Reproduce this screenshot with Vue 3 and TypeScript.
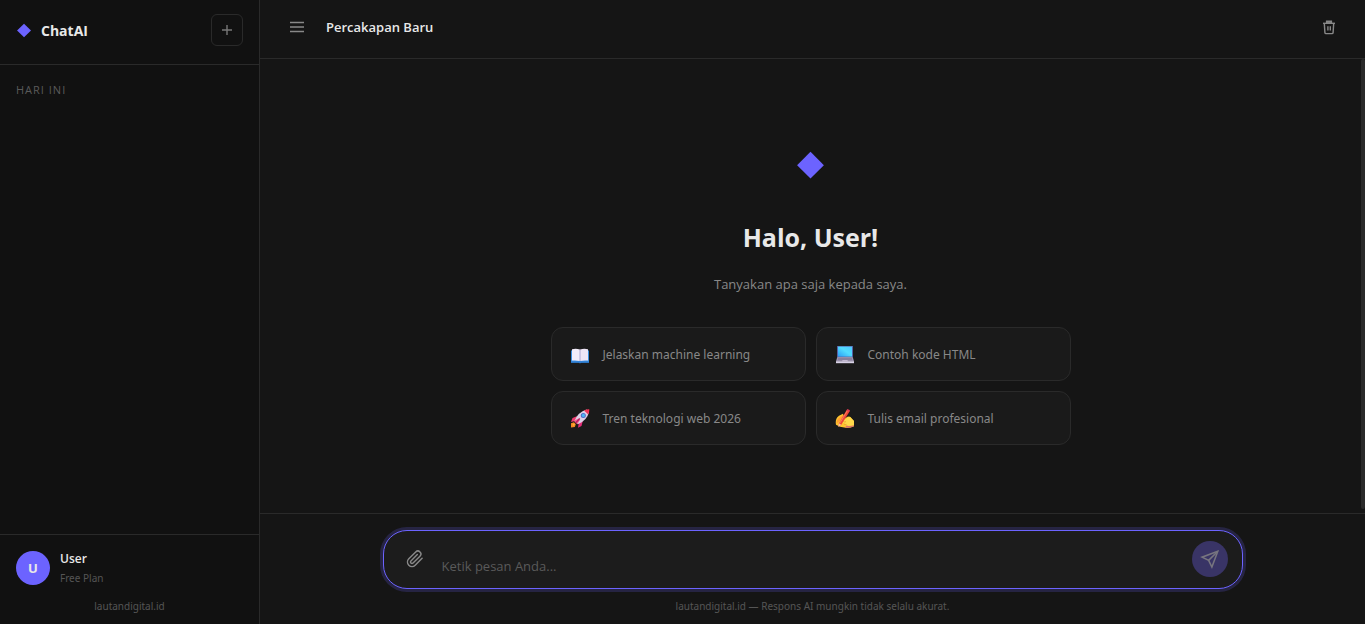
<script setup lang="ts">
import { ref } from 'vue'

interface Suggestion {
  icon: 'book' | 'laptop' | 'rocket' | 'write'
  label: string
}

const suggestions: Suggestion[] = [
  { icon: 'book', label: 'Jelaskan machine learning' },
  { icon: 'laptop', label: 'Contoh kode HTML' },
  { icon: 'rocket', label: 'Tren teknologi web 2026' },
  { icon: 'write', label: 'Tulis email profesional' },
]

const message = ref('')
</script>

<template>
  <div class="app">
    <aside class="sidebar">
      <div class="side-head">
        <div class="brand">
          <svg class="brand-mark" viewBox="0 0 14 14" aria-hidden="true"><path d="M7.500 .7 14 7 7.500 13.300 1 7z" fill="#6c63ff" /></svg>
          <span>ChatAI</span>
        </div>
        <button class="new-chat" type="button" aria-label="Percakapan baru">
          <svg viewBox="0 0 10 10" aria-hidden="true"><path d="M5 0v10M0 5h10" stroke="#777" stroke-width="1.4" /></svg>
        </button>
      </div>
      <nav class="history">
        <h2>HARI INI</h2>
      </nav>
      <footer class="side-foot">
        <div class="account">
          <div class="avatar">U</div>
          <div>
            <div class="name">User</div>
            <div class="plan">Free Plan</div>
          </div>
        </div>
        <a class="site" href="#">lautandigital.id</a>
      </footer>
    </aside>

    <main class="main">
      <header class="topbar">
        <button class="icon-button" type="button" aria-label="Menu">
          <svg class="menu-icon" viewBox="0 0 14 12" aria-hidden="true"><path d="M0 1.5h14M0 6h14M0 10.5h14" stroke="#888" stroke-width="1.3" /></svg>
        </button>
        <h1>Percakapan Baru</h1>
        <button class="icon-button" type="button" aria-label="Hapus percakapan">
          <svg class="trash-icon" viewBox="0 0 14 16" fill="none" stroke="#888" stroke-width="1.4" aria-hidden="true">
            <path d="M1 4.300h12" />
            <path d="M4.600 4V2.300h4.800V4z" fill="#777" />
            <path d="M2.300 4.300l.6 9.300q.1 1 1.100 1h6q1 0 1.100-1l.6-9.300" />
            <path d="M5.900 7.200v4.300M8.300 7.200v4.300" />
          </svg>
        </button>
      </header>

      <section class="chat">
        <div class="welcome">
          <svg class="hero-mark" viewBox="0 0 28 28" aria-hidden="true"><path d="M13.500 .8 26.900 14.200 13.500 27.600.1 14.200z" fill="#6c63ff" /></svg>
          <h2>Halo, User!</h2>
          <p>Tanyakan apa saja kepada saya.</p>
          <div class="suggestions">
            <button v-for="item in suggestions" :key="item.label" class="card" type="button">
              <svg v-if="item.icon === 'book'" class="card-icon" viewBox="0 0 20 20" aria-hidden="true">
                <path d="M1 6.500h18v12H1z" fill="#3b8fe0" />
                <path d="M1 17.200h18v1.500h-8l-1 .7-1-.7H1z" fill="#2f7fd3" />
                <path d="M2 5.200q4-.8 7.900.2V17Q6 16 2 16.600z" fill="#f3edfa" />
                <path d="M18 5.200q-4-.8-7.900.2V17q3.900-1 7.900-.4z" fill="#eee5f6" />
                <path d="M10 5.300V17" stroke="#b7a6cd" stroke-width=".8" />
              </svg>
              <svg v-else-if="item.icon === 'laptop'" class="card-icon" viewBox="0 0 20 20" aria-hidden="true">
                <defs>
                  <linearGradient id="screen" x1="0" y1="1" x2="1" y2="0">
                    <stop stop-color="#2a9df4" />
                    <stop offset=".55" stop-color="#51dcff" />
                    <stop offset="1" stop-color="#4ec8ff" />
                  </linearGradient>
                </defs>
                <path d="M2 2h16v11H2z" fill="#5660a5" />
                <path d="M3 2.600h14v10H3z" fill="url(#screen)" />
                <path d="M2.300 13h15.400l1.300 4.300H1z" fill="#9b91ad" />
                <path d="M1 17.200h18v2H1z" fill="#d8d1e6" />
                <path d="M3 14.300h14M3 15.700h14" stroke="#766c89" stroke-width=".6" />
                <path d="M7.500 16h5l.6 1.700H7z" fill="#c3b9d1" />
              </svg>
              <svg v-else-if="item.icon === 'rocket'" class="card-icon" viewBox="0 0 20 20" aria-hidden="true">
                <g transform="translate(0 .5)">
                  <path d="M1 14.800 4 13.800l1.800 2-1 2.600-3.800.6z" fill="#f58a22" />
                  <path d="M2.500 16 4 15l.8 1.200-1.300 1.300z" fill="#ffb338" />
                  <path d="M7.500 7.500 2.500 9.500 1 13.500l5-1.200z" fill="#ef3d72" />
                  <path d="M12.800 12.500 11.500 17.500l-3.500 1.800.8-5z" fill="#e52c78" />
                  <path d="M4.500 12.500Q8 3.500 16.500 1L19 3.500Q17 12 7.800 15.800z" fill="#dcd1e7" />
                  <path d="M14 1.900Q17 .5 19.300.7q.2 2.400-1.100 5.300z" fill="#f33356" />
                  <path d="M3.900 12.300 8.500 10l1.500 1.500-2.700 4.300z" fill="#f3608e" />
                  <path d="m5.500 14.500 4.300-4.500" stroke="#b91c61" stroke-width="1.200" />
                  <circle cx="13.300" cy="7" r="2.500" fill="#5269c9" />
                  <circle cx="13.400" cy="6.900" r="1.600" fill="#48b9f2" />
                </g>
              </svg>
              <svg v-else class="card-icon" viewBox="0 0 20 20" aria-hidden="true">
                <g transform="translate(0 .8)">
                  <path d="M1 16Q-.2 10 4 7l4-2 1 3-3 4 6.500-4q3-1 4 1.500l2.500 2.600v5.400q-4 2-8.500 1.500L5 18z" fill="#ffc52f" />
                  <path d="m7 13 6-4.500q2.500-.6 3.500 1.200l2.500 2.500v4.500q-4 .7-7.500-.1z" fill="#ffd94a" />
                  <path d="M1.500 15q0-5 4-7l3-2 .5 1.500-4.500 5z" fill="#ff9d32" />
                  <path d="M11.500 16.700q4 1.200 7.500-.3v1q-4 2-9 1.500z" fill="#db7568" />
                  <path d="m11.800 1 2.900 1.400L6.300 16 3.500 18l.3-3.400z" fill="#ef4538" />
                  <path d="m12.300 2-7.900 13" stroke="#ff8a65" stroke-width=".8" />
                  <path d="m3.800 14.600 2.500 1.400-2.900 2.300z" fill="#f6c9a0" />
                  <path d="m12.400.2 2.600 1.300-.8 1.500-2.700-1.300z" fill="#e13a55" />
                  <path d="M8 12.600q1.500 1 3 .3M9 15.200q1.300.8 2.500.4" fill="none" stroke="#e99126" stroke-width=".7" />
                </g>
              </svg>
              <span>{{ item.label }}</span>
            </button>
          </div>
        </div>
        <div class="scroll-thumb" aria-hidden="true"></div>
      </section>

      <footer class="composer-area">
        <form class="composer" @submit.prevent>
          <button class="attach" type="button" aria-label="Lampirkan berkas">
            <svg viewBox="0 0 24 24" fill="none" stroke="#888" stroke-width="2" stroke-linecap="round" stroke-linejoin="round" aria-hidden="true">
              <path d="m21.440 11.050-9.190 9.190a6 6 0 0 1-8.490-8.490l9.190-9.190a4 4 0 0 1 5.660 5.660l-9.200 9.190a2 2 0 0 1-2.830-2.830l8.490-8.480" />
            </svg>
          </button>
          <textarea v-model="message" rows="1" placeholder="Ketik pesan Anda..." aria-label="Pesan"></textarea>
          <button class="send" type="submit" aria-label="Kirim" disabled>
            <svg viewBox="0 0 20 20" fill="none" stroke="#77757f" stroke-width="1.500" stroke-linejoin="miter" aria-hidden="true">
              <path d="M17.800 2.200 2 8.200 8.600 11.400 11.900 18z" />
              <path d="M17.800 2.200 8.600 11.400" />
            </svg>
          </button>
        </form>
        <p class="note">lautandigital.id — Respons AI mungkin tidak selalu akurat.</p>
      </footer>
    </main>
  </div>
</template>

<style>
body {
  margin: 0;
  background: #151515;
}
</style>

<style scoped>
* {
  box-sizing: border-box;
}

.app {
  display: flex;
  height: 100vh;
  overflow: hidden;
  background: #151515;
  color: #e8e8e8;
  font-family: "Segoe UI", "Open Sans", "Noto Sans", sans-serif;
  font-size: 13px;
}

button {
  display: flex;
  align-items: center;
  justify-content: center;
  padding: 0;
  border: 0;
  background: none;
  color: inherit;
  font: inherit;
  cursor: pointer;
}

h1,
h2,
p {
  margin: 0;
}

.sidebar {
  display: flex;
  flex: none;
  flex-direction: column;
  width: 260px;
  border-right: 1px solid #2a2a2a;
  background: #111;
}

.side-head {
  display: flex;
  align-items: center;
  justify-content: space-between;
  height: 65px;
  padding: 0 16px 4px;
  border-bottom: 1px solid #2a2a2a;
}

.brand {
  display: flex;
  align-items: center;
  gap: 10px;
  font-size: 14px;
  font-weight: 700;
}

.brand-mark {
  width: 15px;
  height: 15px;
}

.new-chat {
  width: 32px;
  height: 32px;
  border: 1px solid #2a2a2a;
  border-radius: 6px;
}

.new-chat svg {
  width: 10px;
  height: 10px;
}

.history {
  flex: 1;
  padding: 16px;
}

.history h2 {
  color: #5a5a5a;
  font-size: 11px;
  font-weight: 400;
  letter-spacing: 1px;
  line-height: 18px;
}

.side-foot {
  height: 90px;
  padding: 16px 16px 0;
  border-top: 1px solid #2a2a2a;
}

.account {
  display: flex;
  align-items: center;
  gap: 10px;
  height: 34px;
}

.avatar {
  display: flex;
  align-items: center;
  justify-content: center;
  width: 34px;
  height: 34px;
  border-radius: 50%;
  background: #6c63ff;
  font-weight: 700;
}

.name {
  padding-top: 2px;
  font-size: 12px;
  font-weight: 600;
  line-height: 18px;
}

.plan {
  color: #555;
  font-family: "Segoe UI", "Noto Sans", sans-serif;
  font-size: 10px;
  line-height: 20px;
}

.site,
.note {
  display: block;
  color: #555;
  font-family: "Segoe UI", "Noto Sans", sans-serif;
  font-size: 10px;
  line-height: 16px;
  text-align: center;
  text-decoration: none;
}

.site {
  margin-top: 13px;
}

.main {
  display: flex;
  flex: 1;
  flex-direction: column;
  min-width: 0;
}

.topbar {
  display: flex;
  align-items: center;
  height: 59px;
  padding: 0 19px 4px 20px;
  border-bottom: 1px solid #2a2a2a;
}

.topbar h1 {
  flex: 1;
  margin-left: 12px;
  font-size: 13px;
  font-weight: 600;
}

.icon-button {
  width: 34px;
  height: 34px;
}

.menu-icon {
  width: 14px;
  height: 12px;
}

.trash-icon {
  width: 14px;
  height: 16px;
}

.chat {
  display: flex;
  flex: 1;
  min-height: 0;
}

.welcome {
  display: flex;
  flex: 1;
  flex-direction: column;
  align-items: center;
  padding: 92px 24px 0;
}

.hero-mark {
  flex: none;
  width: 28px;
  height: 28px;
}

.welcome h2 {
  margin-top: 40px;
  font-size: 25px;
  font-weight: 700;
  line-height: 36px;
}

.welcome p {
  margin-top: 18px;
  color: #888;
  font-size: 13px;
  line-height: 22px;
}

.suggestions {
  display: grid;
  grid-template-columns: 1fr 1fr;
  gap: 10px;
  width: 100%;
  max-width: 520px;
  margin-top: 32px;
}

.card {
  justify-content: flex-start;
  gap: 13px;
  height: 54px;
  padding: 0 18px;
  border: 1px solid #2a2a2a;
  border-radius: 12px;
  background: #1a1a1a;
  color: #888;
  font-family: "Segoe UI", "Noto Sans", sans-serif;
  font-size: 12px;
}

.card-icon {
  flex: none;
  width: 20px;
  height: 20px;
}

.scroll-thumb {
  flex: none;
  width: 4px;
  height: calc(100% - 4px);
  border-radius: 2px;
  background: #2a2a2a;
}

.composer-area {
  display: flex;
  flex-direction: column;
  align-items: center;
  height: 111px;
  padding: 16px 24px 0;
  border-top: 1px solid #2a2a2a;
}

.composer {
  display: flex;
  align-items: center;
  gap: 10px;
  width: 100%;
  max-width: 860px;
  height: 59px;
  padding: 0 14px 1px;
  border: 1px solid #6c63ff;
  border-radius: 24px;
  background: #1c1c1c;
  box-shadow: 0 0 0 3px rgba(108, 99, 255, 0.2);
}

.attach {
  width: 34px;
  height: 34px;
}

.attach svg {
  width: 18px;
  height: 18px;
}

textarea {
  flex: 1;
  height: 36px;
  padding: 14px 0 0;
  border: 0;
  outline: 0;
  background: none;
  color: #e8e8e8;
  font: inherit;
  font-size: 13px;
  line-height: 22px;
  resize: none;
}

textarea::placeholder {
  color: #5a5a5a;
  opacity: 1;
}

.send {
  width: 36px;
  height: 36px;
  border-radius: 50%;
  background: #393466;
}

.send svg {
  width: 20px;
  height: 20px;
}

.note {
  margin-top: 9px;
}
</style>
